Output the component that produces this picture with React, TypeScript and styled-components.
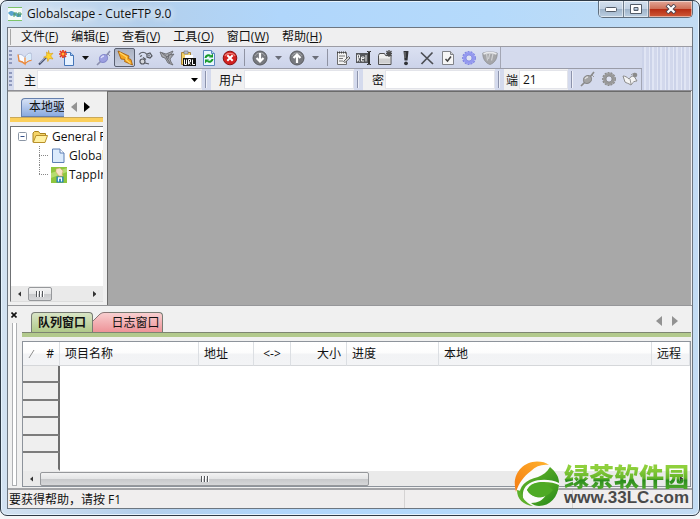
import React from "react";
import styled, { createGlobalStyle, css } from "styled-components";

const Global = createGlobalStyle`
  *, *::before, *::after { box-sizing: border-box; }
  body {
    margin: 0;
    background: #f4f6f8;
    color: #111;
    font: 12px/16px "Open Sans", "Noto Sans CJK SC", sans-serif;
  }
  button, input, select { font: inherit; color: inherit; margin: 0; padding: 0; border: 0; }
  svg { display: block; flex: none; }
`;

/* ---------- window frame ---------- */

const Page = styled.div`
  height: 100vh;
  min-height: 420px;
  padding-bottom: 3px;
`;

const Window = styled.div`
  position: relative;
  height: 100%;
  display: flex;
  flex-direction: column;
  padding: 0 6px 6px;
  border: 1px solid #2f3a46;
  border-radius: 7px;
  background: linear-gradient(90deg, #d3e2f1 0, #b3cfeb 20%, #b0d6fb 40%, #b5dafb 70%, #c3dcf3 100%);
  box-shadow: inset 0 0 0 1px #e6f3fd;
`;

const TitleBar = styled.header`
  flex: none;
  height: 26px;
  display: flex;
  align-items: flex-start;
  gap: 5px;
`;

const TitleIcon = styled.svg`
  margin: 6px 0 0 1px;
`;

const Title = styled.h1`
  flex: 1;
  min-width: 0;
  margin: 5px 0 0;
  font-size: 12px;
  line-height: 16px;
  font-weight: 400;
  text-shadow: 0 0 6px #fff, 0 0 10px #fff;
`;

const Caption = styled.div`
  display: flex;
  height: 17px;
  border: 1px solid #5f6e7d;
  border-top: 0;
  border-radius: 0 0 5px 5px;
  overflow: hidden;
`;

const CaptionButton = styled.button<{ $close?: boolean }>`
  display: flex;
  align-items: center;
  justify-content: center;
  width: ${(p) => (p.$close ? 43 : 25)}px;
  border-right: ${(p) => (p.$close ? 0 : 1)}px solid #6f7d8b;
  box-shadow: inset 0 0 0 1px rgba(255, 255, 255, 0.5);
  background: ${(p) =>
    p.$close
      ? "linear-gradient(#e2a798 0, #cf7159 48%, #b62d14 52%, #cf5a38 100%)"
      : "linear-gradient(#d3e0ee 0, #c2d2e3 48%, #9fb4ca 52%, #bccfe2 100%)"};
`;

const Client = styled.div`
  flex: 1;
  min-height: 0;
  display: flex;
  flex-direction: column;
  border: 1px solid #6d7680;
  background: #f0f0f0;
`;

/* ---------- bars ---------- */

const MenuBar = styled.nav`
  flex: none;
  display: flex;
  align-items: center;
  gap: 13px;
  height: 19px;
  padding-left: 2px;
  border-bottom: 1px solid #9c9ca4;
  background: #efeff0;
  &::before {
    content: "";
    width: 1px;
    height: 16px;
    margin-right: -3px;
    background: #a6a6a6;
  }
`;

const MenuItem = styled.button`
  background: none;
  line-height: 16px;
  white-space: nowrap;
`;

const Rebar = styled.div`
  flex: none;
  display: grid;
  grid-template-columns: minmax(0, 634px) minmax(0, 1fr);
  border-bottom: 1px solid #8f8f96;
  background: #d4daed;
`;

const RebarTail = styled.div`
  background: repeating-linear-gradient(90deg, #ccd3e9 0 2px, #e0e5f4 2px 4px, #d2d8ec 4px 7px, #e3e8f6 7px 8px);
`;

const Bars = styled.div`
  min-width: 0;
  overflow: hidden;
`;

const grip = css`
  &::before {
    content: "";
    flex: none;
    width: 3px;
    height: 16px;
    margin: 0 2px 0 1px;
    background: repeating-linear-gradient(#8f99bd 0 2px, transparent 2px 4px);
  }
`;

const ToolRow = styled.div`
  display: flex;
  height: 22px;
  border-bottom: 1px solid #9a9ca8;
`;

const ToolBar = styled.div`
  display: flex;
  align-items: center;
  border-right: 1px solid #a3a6b4;
  background: linear-gradient(#dbe1f2, #ccd3e9);
  ${grip}
`;

const ToolButton = styled.button<{ $pressed?: boolean; $drop?: boolean }>`
  flex: none;
  display: flex;
  align-items: center;
  justify-content: center;
  width: ${(p) => (p.$drop ? 16 : 21)}px;
  height: 19px;
  border-radius: 2px;
  border: 1px solid ${(p) => (p.$pressed ? "#596071" : "transparent")};
  background: ${(p) => (p.$pressed ? "linear-gradient(#aab1c2, #c8cfe0)" : "none")};
`;

const Separator = styled.span`
  flex: none;
  width: 1px;
  height: 17px;
  margin: 0 4px;
  background: #8f93a3;
`;

const AddressRow = styled.div`
  display: flex;
  align-items: stretch;
  height: 21px;
  border-right: 1px solid #a3a6b4;
  background: #d4daed;
  ${grip}
  &::before { margin-top: 3px; }
`;

const Field = styled.div<{ $width: number }>`
  position: relative;
  flex: none;
  display: flex;
  justify-content: flex-end;
  align-items: stretch;
  width: ${(p) => p.$width}px;
  padding: 1px 0;
  background: #f0f0f1;
  label {
    flex: 1;
    padding: 2px 1px 0 0;
    text-align: right;
    line-height: 17px;
    white-space: nowrap;
  }
`;

const inputBox = css<{ $width: number }>`
  flex: none;
  width: ${(p) => p.$width}px;
  border: 1px solid #e3e4ea;
  background: #fff;
  border-radius: 0;
  outline: 0;
`;

const TextInput = styled.input<{ $width: number }>`
  ${inputBox}
  padding-left: 3px;
`;

const HostSelect = styled.select<{ $width: number }>`
  ${inputBox}
  appearance: none;
`;

const SelectArrow = styled.svg`
  position: absolute;
  right: 4px;
  top: 9px;
  pointer-events: none;
`;

const Divider = styled.span`
  flex: none;
  width: 6px;
  margin: 2px 0;
  border-left: 1px solid #8c93ac;
  box-shadow: inset 1px 0 0 #eef0f8;
  margin-left: 3px;
`;

/* ---------- workspace ---------- */

const Workspace = styled.main`
  flex: 1;
  min-height: 0;
  display: grid;
  grid-template-columns: 99px minmax(0, 1fr);
  border-bottom: 1px solid #96979a;
`;

const Desktop = styled.section`
  margin-right: 1px;
  border-top: 1px solid #6b6b6b;
  border-left: 1px solid #6b6b6b;
  background: #a8a8a8;
`;

const SidePane = styled.aside`
  display: flex;
  flex-direction: column;
  min-width: 0;
  min-height: 0;
  padding: 5px 4px 3px 2px;
  border-top: 1px solid #b4b4b4;
`;

const SideTabs = styled.div`
  display: flex;
  align-items: center;
  flex: none;
  height: 20px;
  padding-left: 11px;
  gap: 7px;
`;

const SideTab = styled.button`
  width: 43px;
  height: 19px;
  padding: 0 0 0 7px;
  overflow: hidden;
  text-align: left;
  white-space: nowrap;
  border: 1px solid #6680ad;
  border-right: 0;
  border-radius: 4px 0 0 0;
  background: linear-gradient(#d7e2f5, #8aaae0);
`;

const PlainButton = styled.button`
  display: flex;
  background: none;
`;

const AccentLine = styled.div<{ $color: string; $line: string }>`
  flex: none;
  height: 5px;
  border-top: 1px solid ${(p) => p.$line};
  background: ${(p) => p.$color};
`;

const TreeBox = styled.div`
  flex: 1;
  min-height: 0;
  margin-top: 4px;
  display: flex;
  flex-direction: column;
  border: 1px solid #6f7174;
  border-right: 0;
  border-bottom-color: #ddd;
  background: #fff;
`;

const Tree = styled.ul`
  flex: 1;
  min-height: 0;
  margin: 0;
  padding: 0 0 0 7px;
  list-style: none;
  overflow: hidden;
`;

const TreeItem = styled.li<{ $child?: boolean }>`
  display: flex;
  align-items: center;
  height: 19px;
  font-size: 12px;
  white-space: nowrap;
  gap: ${(p) => (p.$child ? 2 : 4)}px;
  padding-left: ${(p) => (p.$child ? 21 : 0)}px;
`;

const ScrollBar = styled.div`
  flex: none;
  display: flex;
  align-items: center;
  height: 15px;
  background: #eaeaea;
`;

const ScrollButton = styled.button`
  flex: none;
  display: flex;
  align-items: center;
  justify-content: center;
  width: 17px;
  height: 15px;
  background: none;
`;

const ScrollTrack = styled.div`
  flex: 1;
  min-width: 0;
`;

const ScrollThumb = styled.div<{ $size: string }>`
  display: flex;
  align-items: center;
  justify-content: center;
  width: ${(p) => p.$size};
  height: 14px;
  border: 1px solid #96989b;
  border-radius: 2px;
  background: linear-gradient(#f3f3f3 0, #e4e5e6 48%, #c8c9cb 52%, #d6d7d9 100%);
`;

/* ---------- queue dock ---------- */

const Dock = styled.section`
  flex: none;
  height: 182px;
  display: grid;
  grid-template-columns: 14px minmax(0, 1fr);
  padding: 6px 1px 3px 0;
`;

const DockEdge = styled.div`
  display: flex;
  flex-direction: column;
  align-items: center;
  gap: 5px;
  padding: 0 2px 1px 0;
  &::after {
    content: "";
    flex: 1;
    width: 5px;
    border: 1px solid #aeb0b3;
    border-width: 0 1px 1px;
    background: #fff;
  }
`;

const DockBody = styled.div`
  display: flex;
  flex-direction: column;
  min-width: 0;
`;

const DockTabs = styled.div`
  position: relative;
  flex: none;
  display: flex;
  align-items: stretch;
  height: 20px;
  padding-left: 9px;
`;

const DockTab = styled.button<{ $active?: boolean }>`
  display: flex;
  align-items: center;
  justify-content: center;
  height: 20px;
  width: ${(p) => (p.$active ? 62 : 54)}px;
  border: 1px solid #787c74;
  border-bottom: 0;
  border-radius: ${(p) => (p.$active ? "4px 4px 0 0" : "0 4px 0 0")};
  border-left-width: ${(p) => (p.$active ? 1 : 0)}px;
  font-weight: ${(p) => (p.$active ? 700 : 400)};
  white-space: nowrap;
  background: ${(p) => (p.$active ? "linear-gradient(#d9e5c6, #b0c98a)" : "linear-gradient(#f8cfd0, #ee9398)")};
`;

const DockNav = styled.div`
  display: flex;
  gap: 10px;
  align-items: center;
  margin-left: auto;
  padding: 0 13px 2px 0;
`;

const TableBox = styled.div`
  flex: 1;
  min-height: 0;
  display: flex;
  flex-direction: column;
  margin-top: 4px;
  border: 1px solid #8d939b;
  background: #fff;
`;

const TableClip = styled.div`
  flex: 1;
  min-height: 0;
  overflow: hidden;
`;

const Table = styled.table`
  width: 100%;
  table-layout: fixed;
  border-collapse: separate;
  border-spacing: 0;
`;

const HeadCell = styled.th<{ $align?: string; $width?: number }>`
  width: ${(p) => (p.$width ? `${p.$width}px` : "auto")};
  height: 24px;
  padding: 0 5px;
  text-align: ${(p) => p.$align ?? "left"};
  font-weight: 400;
  white-space: nowrap;
  overflow: hidden;
  border-right: 1px solid #dcdfe3;
  border-bottom: 1px solid #d5d7da;
  background: linear-gradient(#fff 0, #fdfdfd 45%, #f2f3f5 55%, #f3f4f6 100%);
`;

const SortHead = styled.span`
  display: flex;
  justify-content: space-between;
`;

const RowHead = styled.td`
  height: 17px;
  padding: 0;
  border-right: 2px solid #6e6e6e;
  border-bottom: 2px solid #7c7c7c;
  background: #efefef;
  tr:nth-child(even) > & { height: 18px; }
  tr:last-child > & { border-bottom-color: #efefef; }
`;

const StatusBar = styled.footer`
  flex: none;
  display: grid;
  grid-template-columns: 397px 168px minmax(0, 1fr);
  height: 20px;
  border-top: 2px solid #a3a4a7;
  background: #f0eeee;
`;

const StatusCell = styled.div`
  padding: 2px 1px 0;
  border-right: 1px solid #d5d3d3;
  &:last-child { border-right: 0; }
`;

/* ---------- corner badge over the window ---------- */

const Badge = styled.div`
  position: absolute;
  right: 10px;
  bottom: 8px;
  display: flex;
  align-items: center;
  gap: 4px;
`;

const BadgeText = styled.div`
  white-space: nowrap;
`;

const BadgeName = styled.div`
  font: 900 25px/27px "Noto Sans CJK SC", sans-serif;
  color: transparent;
  background: linear-gradient(#8fd03c 20%, #64b52a 60%, #2b8d1d 68%, #4aa52a 95%);
  background-clip: text;
  -webkit-background-clip: text;
`;

const BadgeUrl = styled.div`
  font: 700 17px/18px "Liberation Sans", sans-serif;
  color: #4a4a4a;
`;

/* ---------- drawings ---------- */

const Icon = ({ children, size = 16 }: { children: React.ReactNode; size?: number }) => (
  <svg width={size} height={size} viewBox="0 0 16 16" aria-hidden="true">{children}</svg>
);

const Caret = ({ color = "#111" }: { color?: string }) => (
  <svg width="7" height="4" viewBox="0 0 7 4" aria-hidden="true"><path d="M0 0h7L3.500 4z" fill={color} /></svg>
);

const SideArrow = ({ dir, color, h = 10 }: { dir: "left" | "right"; color: string; h?: number }) => (
  <svg width={h * 0.6} height={h} viewBox="0 0 6 10" aria-hidden="true">
    <path d={dir === "left" ? "M6 0v10L0 5z" : "M0 0v10l6-5z"} fill={color} />
  </svg>
);

const ThumbGrip = () => (
  <svg width="8" height="6" viewBox="0 0 8 6" aria-hidden="true">
    <path d="M.5 0v6M3.500 0v6M6.500 0v6" stroke="#55585c" />
    <path d="M1.500 0v6M4.500 0v6M7.500 0v6" stroke="#fff" />
  </svg>
);

const Book = () => (
  <Icon>
    <path d="M1.500 4.500C4 4 6 5 8 7.500 9 5 11 3 14 3l.5 7C12 10.500 10 11.500 8 14 6 12 4 11 2 11z" fill="#f9fbff" stroke="#9aa9c9" strokeWidth=".7" />
    <path d="M1 4.500L2 11c2 .3 4 1 6 3V7.500M8 14c1.500-2.500 4-3.500 6.500-3.700" fill="none" stroke="#ec8a3d" strokeWidth="1.300" />
    <path d="M9 7c1-2 3-3 5-3l.3 5.500c-2 .2-4 1-5.300 2.500z" fill="#d9ebfb" />
  </Icon>
);

const Wand = () => (
  <Icon>
    <path d="M1 14.500l7-7" stroke="#4d5670" strokeWidth="2" />
    <path d="M2 13l6-6" stroke="#a8b4d4" strokeWidth=".7" />
    <path d="M10.500.5l1 3.300 3.500-.6-2.300 2.700L15 9l-3.600-.5-1.600 3-.6-3.500-3.600-.8 3.200-1.500L8.500 2l2 1.600z" fill="#ffd62e" stroke="#d69812" strokeWidth=".6" />
  </Icon>
);

const NewDoc = () => (
  <Icon>
    <path d="M5.500 2.500h6l3 3v10h-9z" fill="#e7f2ff" stroke="#4676b8" />
    <path d="M11.500 2.500v3h3" fill="#a8cbf2" stroke="#4676b8" />
    <path d="M1 1l6 6M7 1L1 7M4 0v8M0 4h8" stroke="#e63517" strokeWidth="1.700" />
    <circle cx="4" cy="4" r="1.500" fill="#ffb43a" />
  </Icon>
);

const Plug = ({ gray }: { gray?: boolean }) => (
  <Icon>
    <path d="M1 15l4-4M10 6l4-5" stroke={gray ? "#8b8b8b" : "#8b8fae"} strokeWidth="1.700" />
    <ellipse cx="7.500" cy="8.500" rx="4.300" ry="3.700" transform="rotate(-35 7.500 8.500)" fill={gray ? "#a4a4a4" : "#9c9fe0"} stroke={gray ? "#888" : "#8589cc"} />
    <path d="M5 8c.7-1.300 1.700-2 3-2" stroke={gray ? "#ddd" : "#dcdefc"} strokeWidth="1.300" fill="none" />
    <path d="M12 4l2 2" stroke={gray ? "#999" : "#8b8fae"} />
  </Icon>
);

const Bolt = ({ gray }: { gray?: boolean }) =>
  gray ? (
    <Icon>
      <path d="M1 2l6 2 7-3-2 4 3-1-4 5 1 3 2 3-5-2-3-5-3-1z" fill="#a5a6ab" stroke="#63646a" strokeWidth=".8" />
      <path d="M3 3l5 4 4-3M7 7l4 6M10 4l-1 5" stroke="#64656c" strokeWidth=".9" fill="none" />
    </Icon>
  ) : (
    <Icon>
      <path d="M1 1l11 5-.5 2.500 2.500 1 1.500 5.500-8-3.500.5-2-4-.5z" fill="#f6a51c" stroke="#a35a06" strokeWidth=".8" />
      <path d="M2.500 2.500l7 4.500-.5 2.500 4.500 4" stroke="#ffd668" strokeWidth="1.200" fill="none" />
    </Icon>
  );

const Links = () => (
  <Icon>
    <g fill="none" stroke="#55585f" strokeWidth="1.200">
      <path d="M1 4.500c2-3 6-3 8 0M9 4l3-1 2 3-2 2-3-1z" />
      <circle cx="4.500" cy="11.500" r="2.500" fill="#d5d6da" />
      <path d="M5 7.500l3 2M7 13l4 1M2 6.500l2-1M11 4.500v2" />
    </g>
  </Icon>
);

const UrlPaste = () => (
  <Icon>
    <path d="M1.500 2.500h9v12h-9z" fill="#f2cf66" stroke="#a9853a" />
    <path d="M4 1h4v3H4z" fill="#b8bcc8" stroke="#777" strokeWidth=".6" />
    <path d="M5 5h8v6H5z" fill="#fff" />
    <path d="M3 8h13v8H3z" fill="#111" />
    <path d="M4.500 9.500v5h2v-5M8.500 14.500v-5h2v2.500h-2l2 2.500M12.500 9.500v5h2.500" stroke="#fff" fill="none" />
  </Icon>
);

const Refresh = () => (
  <Icon>
    <path d="M2.500.5h8l3 3v12h-11z" fill="#e9f5ff" stroke="#5a87bf" />
    <path d="M10.500.5v3h3" fill="#b9d8f2" stroke="#5a87bf" />
    <path d="M4.500 8c.3-2.500 3-3.500 5-2M11.500 9c-.3 2.500-3 3.500-5 2" stroke="#159a28" strokeWidth="2" fill="none" />
    <path d="M8 7.500h4V3.500zM8 9.500H4v4z" fill="#159a28" />
  </Icon>
);

const Stop = () => (
  <Icon>
    <circle cx="8" cy="8" r="6.800" fill="#d1201f" stroke="#8b1010" />
    <path d="M3 6c1-3 8-4 10 0" fill="none" stroke="#ee7d76" strokeWidth="1.200" />
    <path d="M5.300 5.300l5.400 5.400M10.700 5.300l-5.400 5.400" stroke="#fff" strokeWidth="2" />
  </Icon>
);

const Transfer = ({ up }: { up?: boolean }) => (
  <Icon>
    <circle cx="8" cy="8" r="7" fill="#77797e" stroke="#5b5d62" />
    <path d="M3 6c1.500-4 8.500-4 10 0" fill="none" stroke="#a5a7ab" />
    <path d={up ? "M8 13V5M4.500 8L8 4.500 11.500 8" : "M8 3v8M4.500 8L8 11.500 11.500 8"} stroke="#fff" strokeWidth="2.200" fill="none" />
  </Icon>
);

const Note = () => (
  <Icon>
    <path d="M2.500 2.500h9v12h-9z" fill="#f3f3f3" stroke="#6c6c6c" />
    <path d="M2 2.500h10" stroke="#444" strokeWidth="2" strokeDasharray="1 1" />
    <path d="M4 6h6M4 8.500h4M4 11h4" stroke="#777" />
    <path d="M8.500 11.500l5-5 1.500 1.500-5 4.500z" fill="#ddd" stroke="#444" strokeWidth=".8" />
  </Icon>
);

const Rename = () => (
  <Icon>
    <path d="M0 3h12v10H0z" fill="#55575b" />
    <path d="M1.500 11.500V5h2v3h-2l2 3.500M8 8.500H5.500v2.500H8M5.500 9V7H8v1.500M10 11.500V5" stroke="#eee" fill="none" />
    <path d="M11 1.500h1.500v13H11M15 1.500h-1.500v13H15" stroke="#333" fill="none" />
  </Icon>
);

const NewFolder = () => (
  <Icon>
    <path d="M1.500 5.500l1-2h5l1 2h5.500v9H1.500z" fill="#efefef" stroke="#4e4e4e" />
    <path d="M2 8.500h11v5H2z" fill="#cfcfcf" />
    <path d="M9.500 1l5 5M14.500 1l-5 5M12 0v7M9 3.500h6" stroke="#4c4c4c" strokeWidth="1.300" />
  </Icon>
);

const Bang = () => (
  <Icon>
    <path d="M5.500 1h5L9.500 10.500h-3z" fill="#303236" />
    <path d="M7 2v6" stroke="#888" />
    <circle cx="8" cy="13.300" r="1.900" fill="#303236" />
  </Icon>
);

const Cross = () => (
  <Icon><path d="M2 2.500l12 11.500M13.500 2.500L2.500 14" stroke="#4c4e53" strokeWidth="1.700" /></Icon>
);

const CheckDoc = () => (
  <Icon>
    <path d="M2.500 1.500h8l3 3v10h-11z" fill="#f6f6f6" stroke="#808389" />
    <path d="M10.500 1.500v3h3" fill="#ccc" stroke="#808389" />
    <path d="M5.500 9l2 2 3.500-4.500" stroke="#444" strokeWidth="1.500" fill="none" />
  </Icon>
);

const Gear = ({ gray }: { gray?: boolean }) => (
  <Icon>
    <circle cx="8" cy="8" r="6.200" fill="none" stroke={gray ? "#8a8a8a" : "#7f85e2"} strokeWidth="1.500" strokeDasharray="2 1" />
    <circle cx="8" cy="8" r="4.500" fill="none" stroke={gray ? "#999" : "#9499f0"} strokeWidth="3" />
    <circle cx="8" cy="8" r="3" fill="#dfe3f2" stroke={gray ? "#777" : "#747be0"} strokeWidth=".7" />
  </Icon>
);

const Shield = () => (
  <Icon>
    <path d="M.8 3C5 1.500 11 1.500 15.200 3 15.500 8 13 13 8 14.500 3 13 .5 8 .8 3z" fill="#a5a6a9" stroke="#88898c" strokeWidth=".7" />
    <path d="M1.500 3.800C5 2.500 11 2.500 14.500 3.800" stroke="#e8e9ec" strokeWidth="1.800" fill="none" />
    <path d="M4.500 3.500l1 7M8 3l-1.500 6M11 3.500l-1.500 7" stroke="#d0d1d4" strokeWidth="1.200" />
  </Icon>
);

const SendBook = () => (
  <Icon>
    <path d="M1 5c2 0 4 1 6 3 1-2 3-3 5-3l3 5c-3 0-4 1-6 4-3-2-5-2-6-3z" fill="#f4f4f4" stroke="#8c8c8c" />
    <path d="M8 8l1 5M9 4c2-2 3-1 4-2" stroke="#999" fill="none" />
    <circle cx="13" cy="4" r="2.300" fill="#8b8b8b" />
  </Icon>
);

const FolderIcon = () => (
  <svg width="16" height="16" viewBox="0 0 16 16" aria-hidden="true">
    <path d="M1 13V4l1.500-1.500h4L8 4.500h5.500V7" fill="#f5d468" stroke="#a8821e" />
    <path d="M1.200 13.500L4 6.500h11.500l-2.500 7z" fill="#fff0a0" stroke="#b8902a" />
  </svg>
);

const PageIcon = () => (
  <svg width="16" height="16" viewBox="0 0 16 16" aria-hidden="true">
    <path d="M1.500 1h7.500l4 4v9.500H1.500z" fill="#dcebfc" stroke="#5d7fb4" />
    <path d="M9 1v4h4" fill="#fff" stroke="#5d7fb4" />
  </svg>
);

const TappIcon = () => (
  <svg width="16" height="16" viewBox="0 0 16 16" aria-hidden="true">
    <path d="M0 0h16v16H0z" fill="#8fc63d" />
    <path d="M0 6L16 1v4L0 11z" fill="#b5dc6f" />
    <path d="M5.500 9.500h7v6h-7z" fill="#1c7fb8" />
    <path d="M7.500 14.500v-3.500h3v3.500" stroke="#fff" strokeWidth="1.300" fill="none" />
    <path d="M5 2l4-1 3 3-1 3 1 2H8L5 5z" fill="#f7e3c7" stroke="#d79c62" strokeWidth=".5" />
  </svg>
);

const Leaf = () => (
  <svg width="46" height="46" viewBox="0 0 46 46" aria-hidden="true">
    <defs>
      <linearGradient id="orange" x1="0" y1="1" x2="1" y2="0"><stop stopColor="#f47b12" /><stop offset="1" stopColor="#ffb22c" /></linearGradient>
      <linearGradient id="green" x1="0" y1="0" x2="1" y2="1"><stop stopColor="#72bd2c" /><stop offset="1" stopColor="#1f8418" /></linearGradient>
    </defs>
    <circle cx="23" cy="23" r="22" fill="#fbfbfb" />
    <path d="M2 31C-3 14 8 1 23 .5c5 0 9 1 12 3.500-7-1-13 1-18 6C9 16 5 22 2 31z" fill="url(#orange)" />
    <path d="M6 36C4 25 12 19 24 16c5-2 9-5 12-10 6 5 9 10 9 16-8-4-20-4-27-1-7 3-10 8-9 16z" fill="url(#green)" />
    <path d="M13 29c3-6 9-8 17-8 6 0 11 1 15 3-1 12-9 21-20 21-3 0-6-1-8-3 7 0 12-3 15-8-6 4-14 3-19-5z" fill="url(#green)" />
    <path d="M13 29c3-6 9-8 17-8l9 8c-5 6-10 8-16 7-4-1-8-3-10-7z" fill="#4eaa25" />
    <path d="M3 29c0 9 6 15 16 16C11 41 8 37 7 30z" fill="#5db02b" />
  </svg>
);

/* ---------- data ---------- */

const menus: [string, string][] = [
  ["文件", "F"], ["编辑", "E"], ["查看", "V"], ["工具", "O"], ["窗口", "W"], ["帮助", "H"],
];

type Tool = { name: string; icon: React.ReactNode; drop?: boolean; pressed?: boolean } | null;

const tools: Tool[] = [
  { name: "站点管理器", icon: <Book /> },
  { name: "连接向导", icon: <Wand /> },
  { name: "新建", icon: <NewDoc /> },
  { name: "新建选项", icon: <Caret />, drop: true },
  { name: "连接", icon: <Plug /> },
  { name: "快速连接", icon: <Bolt />, pressed: true },
  { name: "重新连接", icon: <Links /> },
  { name: "断开连接", icon: <Bolt gray /> },
  { name: "粘贴 URL", icon: <UrlPaste /> },
  { name: "刷新", icon: <Refresh /> },
  { name: "停止", icon: <Stop /> },
  null,
  { name: "下载", icon: <Transfer /> },
  { name: "下载选项", icon: <Caret color="#6a6d78" />, drop: true },
  { name: "上传", icon: <Transfer up /> },
  { name: "上传选项", icon: <Caret color="#6a6d78" />, drop: true },
  null,
  { name: "编辑", icon: <Note /> },
  { name: "重命名", icon: <Rename /> },
  { name: "新建文件夹", icon: <NewFolder /> },
  { name: "执行", icon: <Bang /> },
  { name: "删除", icon: <Cross /> },
  { name: "属性", icon: <CheckDoc /> },
  { name: "设置", icon: <Gear /> },
  { name: "安全", icon: <Shield /> },
];

const columns: { label: string; width?: number; align?: string }[] = [
  { label: "项目名称", width: 139 },
  { label: "地址", width: 55 },
  { label: "<->", width: 37, align: "center" },
  { label: "大小", width: 56, align: "right" },
  { label: "进度", width: 92 },
  { label: "本地", width: 213 },
  { label: "远程" },
];

export default function App() {
  return (
    <Page>
      <Global />
      <Window>
        <TitleBar>
          <TitleIcon width="14" height="14" viewBox="0 0 14 14" aria-hidden="true">
            <path d="M0 0h14v14H0z" fill="#f6fbf7" />
            <path d="M0 .5h14M0 13.500h14" stroke="#7cc36a" />
            <path d="M0 6c3-3 5-2 7 0l6 1v3H9L7 8 3 9z" fill="#5aa3cf" />
            <path d="M6 10V6h3M6 8h2M10 10V6h3v2h-3" stroke="#4a9a66" fill="none" />
          </TitleIcon>
          <Title>Globalscape - CuteFTP 9.0</Title>
          <Caption>
            <CaptionButton aria-label="最小化">
              <svg width="12" height="5" viewBox="0 0 12 5"><rect x=".5" y=".5" width="11" height="4" rx="1" fill="#fff" stroke="#535c68" /></svg>
            </CaptionButton>
            <CaptionButton aria-label="最大化">
              <svg width="12" height="10" viewBox="0 0 12 10"><path d="M.5.5h11v9H.5zM4 3.500v3h4v-3z" fill="#fff" fillRule="evenodd" stroke="#535c68" /></svg>
            </CaptionButton>
            <CaptionButton $close aria-label="关闭">
              <svg width="12" height="10" viewBox="0 0 12 10">
                <path d="M2 1l8 8M10 1L2 9" stroke="#4d4652" strokeWidth="4" />
                <path d="M2.500 1.500l7 7M9.500 1.500l-7 7" stroke="#fff" strokeWidth="2.200" />
              </svg>
            </CaptionButton>
          </Caption>
        </TitleBar>

        <Client>
          <MenuBar>
            {menus.map(([name, key]) => (
              <MenuItem key={key}>{name}(<u>{key}</u>)</MenuItem>
            ))}
          </MenuBar>

          <Rebar>
            <Bars>
              <ToolRow>
                <ToolBar>
                  {tools.map((t, i) =>
                    t ? (
                      <ToolButton key={i} aria-label={t.name} $drop={t.drop} $pressed={t.pressed}>{t.icon}</ToolButton>
                    ) : (
                      <Separator key={i} />
                    )
                  )}
                </ToolBar>
              </ToolRow>
              <AddressRow>
                <Field $width={188}>
                  <label htmlFor="host">主</label>
                  <HostSelect id="host" $width={165} />
                  <SelectArrow width="7" height="4" viewBox="0 0 7 4"><path d="M0 0h7L3.500 4z" /></SelectArrow>
                </Field>
                <Divider />
                <Field $width={143}>
                  <label htmlFor="user">用户</label>
                  <TextInput id="user" $width={110} />
                </Field>
                <Divider />
                <Field $width={132}>
                  <label htmlFor="pass">密</label>
                  <TextInput id="pass" type="password" $width={110} />
                </Field>
                <Divider />
                <Field $width={64}>
                  <label htmlFor="port">端</label>
                  <TextInput id="port" defaultValue="21" $width={49} />
                </Field>
                <Divider />
                <ToolButton aria-label="连接"><Plug gray /></ToolButton>
                <ToolButton aria-label="选项"><Gear gray /></ToolButton>
                <ToolButton aria-label="添加到站点"><SendBook /></ToolButton>
              </AddressRow>
            </Bars>
            <RebarTail />
          </Rebar>

          <Workspace>
            <SidePane>
              <SideTabs>
                <SideTab>本地驱动器</SideTab>
                <PlainButton aria-label="上一个"><SideArrow dir="left" color="#929292" /></PlainButton>
                <PlainButton aria-label="下一个"><SideArrow dir="right" color="#000" /></PlainButton>
              </SideTabs>
              <AccentLine $color="#fbcf5b" $line="#c9a95a" />
              <TreeBox>
                <Tree>
                  <TreeItem>
                    <svg width="10" height="19" viewBox="0 0 10 19" aria-hidden="true">
                      <rect x=".5" y="5.500" width="8" height="8" rx="1" fill="#fff" stroke="#8b96a5" />
                      <path d="M2.500 9.500h4" stroke="#35518a" />
                    </svg>
                    <FolderIcon />General FTP Sites
                  </TreeItem>
                  <TreeItem $child>
                    <svg width="10" height="19" viewBox="0 0 10 19" aria-hidden="true">
                      <path d="M.5 0v19M0 9.500h10" stroke="#888" strokeDasharray="1 1" />
                    </svg>
                    <PageIcon />GlobalSCAPE
                  </TreeItem>
                  <TreeItem $child>
                    <svg width="10" height="19" viewBox="0 0 10 19" aria-hidden="true">
                      <path d="M.5 0v10M0 9.500h10" stroke="#888" strokeDasharray="1 1" />
                    </svg>
                    <TappIcon />TappIn
                  </TreeItem>
                </Tree>
                <ScrollBar>
                  <ScrollButton aria-label="向左"><SideArrow dir="left" color="#333" h={6} /></ScrollButton>
                  <ScrollTrack><ScrollThumb $size="24px"><ThumbGrip /></ScrollThumb></ScrollTrack>
                  <ScrollButton aria-label="向右"><SideArrow dir="right" color="#333" h={6} /></ScrollButton>
                </ScrollBar>
              </TreeBox>
            </SidePane>
            <Desktop />
          </Workspace>

          <Dock>
            <DockEdge>
              <PlainButton aria-label="关闭面板">
                <svg width="6" height="6" viewBox="0 0 6 6"><path d="M.5.5l5 5M5.500.5l-5 5" stroke="#111" strokeWidth="1.600" /></svg>
              </PlainButton>
            </DockEdge>
            <DockBody>
              <DockTabs>
                <DockTab $active>队列窗口</DockTab>
                <svg width="16" height="20" viewBox="0 0 16 20" aria-hidden="true">
                  <defs><linearGradient id="pink" x2="0" y2="1"><stop stopColor="#f8cfd0" /><stop offset="1" stopColor="#ee9398" /></linearGradient></defs>
                  <path d="M0 20V9L7 2Q9 .5 11 .5h5V20z" fill="url(#pink)" />
                  <path d="M0 9L7 2Q9 .5 11 .5h5" fill="none" stroke="#8a7575" />
                </svg>
                <DockTab>日志窗口</DockTab>
                <DockNav>
                  <PlainButton aria-label="上一个"><SideArrow dir="left" color="#929292" /></PlainButton>
                  <PlainButton aria-label="下一个"><SideArrow dir="right" color="#929292" /></PlainButton>
                </DockNav>
              </DockTabs>
              <AccentLine $color="#b2c98c" $line="#7d8472" />
              <TableBox>
                <TableClip>
                  <Table>
                    <thead>
                      <tr>
                        <HeadCell $width={37}><SortHead><svg width="8" height="16" viewBox="0 0 8 16"><path d="M1 12L6 4" stroke="#8f8f8f" /></svg>#</SortHead></HeadCell>
                        {columns.map((c) => (
                          <HeadCell key={c.label} $width={c.width} $align={c.align}>{c.label}</HeadCell>
                        ))}
                      </tr>
                    </thead>
                    <tbody>
                      {[1, 2, 3, 4, 5, 6].map((n) => (
                        <tr key={n}><RowHead /><td colSpan={7} /></tr>
                      ))}
                    </tbody>
                  </Table>
                </TableClip>
                <ScrollBar>
                  <ScrollButton aria-label="向左"><SideArrow dir="left" color="#333" h={6} /></ScrollButton>
                  <ScrollTrack><ScrollThumb $size="52%"><ThumbGrip /></ScrollThumb></ScrollTrack>
                  <ScrollButton aria-label="向右"><SideArrow dir="right" color="#333" h={6} /></ScrollButton>
                </ScrollBar>
              </TableBox>
            </DockBody>
          </Dock>

          <StatusBar>
            <StatusCell>要获得帮助，请按 F1</StatusCell>
            <StatusCell />
            <StatusCell />
          </StatusBar>
        </Client>

        <Badge>
          <Leaf />
          <BadgeText>
            <BadgeName>绿茶软件园</BadgeName>
            <BadgeUrl>www.33LC.com</BadgeUrl>
          </BadgeText>
        </Badge>
      </Window>
    </Page>
  );
}
